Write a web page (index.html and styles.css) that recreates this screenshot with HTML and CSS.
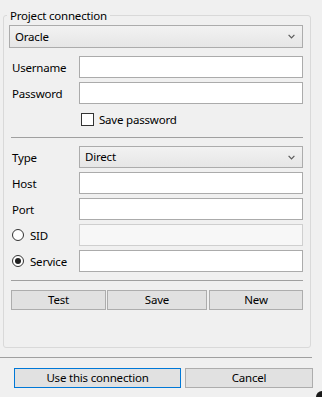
FILE: index.html
```html
<!DOCTYPE html>
<html>
<head>
<meta charset="utf-8">
<link rel="stylesheet" href="styles.css">
</head>
<body>
<div class="dialog">
  <fieldset class="group">
    <legend>Project connection</legend>
    <div class="combo combo-db"><span>Oracle</span><svg class="chev" width="7" height="5" viewBox="0 0 7 5"><path d="M0.6 0.8 L3.5 3.8 L6.4 0.8" fill="none" stroke="#5a5a5a" stroke-width="1.2"/></svg></div>
    <div class="form">
      <label class="lbl">Username</label><input class="field" type="text">
      <label class="lbl">Password</label><input class="field" type="password">
      <span></span><label class="check"><span class="box"></span>Save password</label>
    </div>
    <div class="sep"></div>
    <div class="form">
      <label class="lbl">Type</label><div class="combo"><span>Direct</span><svg class="chev" width="7" height="5" viewBox="0 0 7 5"><path d="M0.6 0.8 L3.5 3.8 L6.4 0.8" fill="none" stroke="#5a5a5a" stroke-width="1.2"/></svg></div>
      <label class="lbl">Host</label><input class="field" type="text">
      <label class="lbl">Port</label><input class="field" type="text">
      <label class="radio"><span class="circle"></span>SID</label><input class="field" type="text" disabled>
      <label class="radio"><span class="circle on"></span>Service</label><input class="field" type="text">
    </div>
    <div class="sep sep-actions"></div>
    <div class="actions">
      <button class="btn btn-test">Test</button>
      <button class="btn btn-save">Save</button>
      <button class="btn btn-new">New</button>
    </div>
  </fieldset>
  <div class="footer-sep"></div>
  <div class="footer">
    <button class="btn btn-use">Use this connection</button>
    <button class="btn btn-cancel">Cancel</button>
  </div>
  <div class="corner"></div>
</div>
</body>
</html>
```
FILE: styles.css
```css
* { box-sizing: border-box; }
html, body {
  margin: 0;
  padding: 0;
  background: #f0f0f0;
}
body {
  font-family: "Noto Sans", "Open Sans", sans-serif;
  font-size: 11.5px;
  letter-spacing: -0.2px;
  color: #000;
  width: 322px;
  height: 397px;
  overflow: hidden;
}
.dialog {
  position: relative;
  width: 322px;
  height: 397px;
  padding-top: 7px;
}
.group {
  margin: 0 0 0 3px;
  width: 308px;
  padding: 0 7px 37px 0;
  border: 1px solid #d9d9d9;
  border-radius: 3px;
  min-width: 0;
}
.group legend {
  margin-left: 3px;
  padding: 0 3px;
  line-height: 17px;
  height: 17px;
  font-size: 11.5px;
}
.combo {
  height: 22px;
  border: 1px solid #acacac;
  background: linear-gradient(#f2f2f2, #e6e6e6);
  display: flex;
  align-items: center;
  justify-content: space-between;
  padding: 0 7px 0 5px;
}
.combo-db {
  margin: 1px 0 0 5px;
  height: 23px;
}
.combo span { line-height: 16px; }
.chev { display: block; }
.form {
  display: grid;
  grid-template-columns: 67px 1fr;
  grid-auto-rows: 22px;
  row-gap: 4px;
  margin-left: 8px;
  align-items: center;
}
.combo-db + .form { margin-top: 8px; }
.lbl { line-height: 16px; padding-top: 1px; }
.field {
  height: 22px;
  width: 100%;
  border: 1px solid #ababab;
  background: #fff;
  margin: 0;
  padding: 0 4px;
  font: inherit;
  outline: none;
}
.field:disabled {
  background: #f7f7f7;
  border-color: #cfcfcf;
}
.check {
  display: flex;
  align-items: center;
  gap: 5px;
  padding-left: 2px;
}
.box {
  width: 13px;
  height: 13px;
  border: 1px solid #333;
  background: #fff;
}
.radio {
  display: flex;
  align-items: center;
  gap: 6px;
}
.circle {
  width: 12px;
  height: 12px;
  border: 1px solid #333;
  border-radius: 50%;
  background: #fff;
  display: flex;
  align-items: center;
  justify-content: center;
}
.circle.on::after {
  content: "";
  width: 6px;
  height: 6px;
  border-radius: 50%;
  background: #1f1f1f;
}
.sep {
  height: 1px;
  background: #a0a0a0;
  margin: 7px 0 8px 7px;
}
.sep-actions { margin: 8px 0 9px 7px; }
.actions {
  display: flex;
  margin-left: 7px;
}
.btn {
  height: 20px;
  border: 1px solid #adadad;
  background: #e1e1e1;
  font: inherit;
  letter-spacing: inherit;
  color: #000;
  padding: 0;
  margin: 0;
  line-height: 16px;
}
.btn-test { width: 95px; margin-right: 1px; }
.btn-save { width: 100px; margin-right: 2px; }
.btn-new { flex: 1; }
.footer-sep {
  height: 1px;
  width: 312px;
  background: #a0a0a0;
  margin-top: 9px;
}
.footer {
  display: flex;
  margin: 10px 0 0 14px;
  gap: 4px;
}
.btn-use { width: 167px; border-color: #0078d7; }
.btn-cancel { width: 128px; }
.corner {
  position: absolute;
  right: 0;
  bottom: 0;
  width: 6px;
  height: 6px;
  background: #1a1a1a;
  border-top-left-radius: 6px;
}
```
